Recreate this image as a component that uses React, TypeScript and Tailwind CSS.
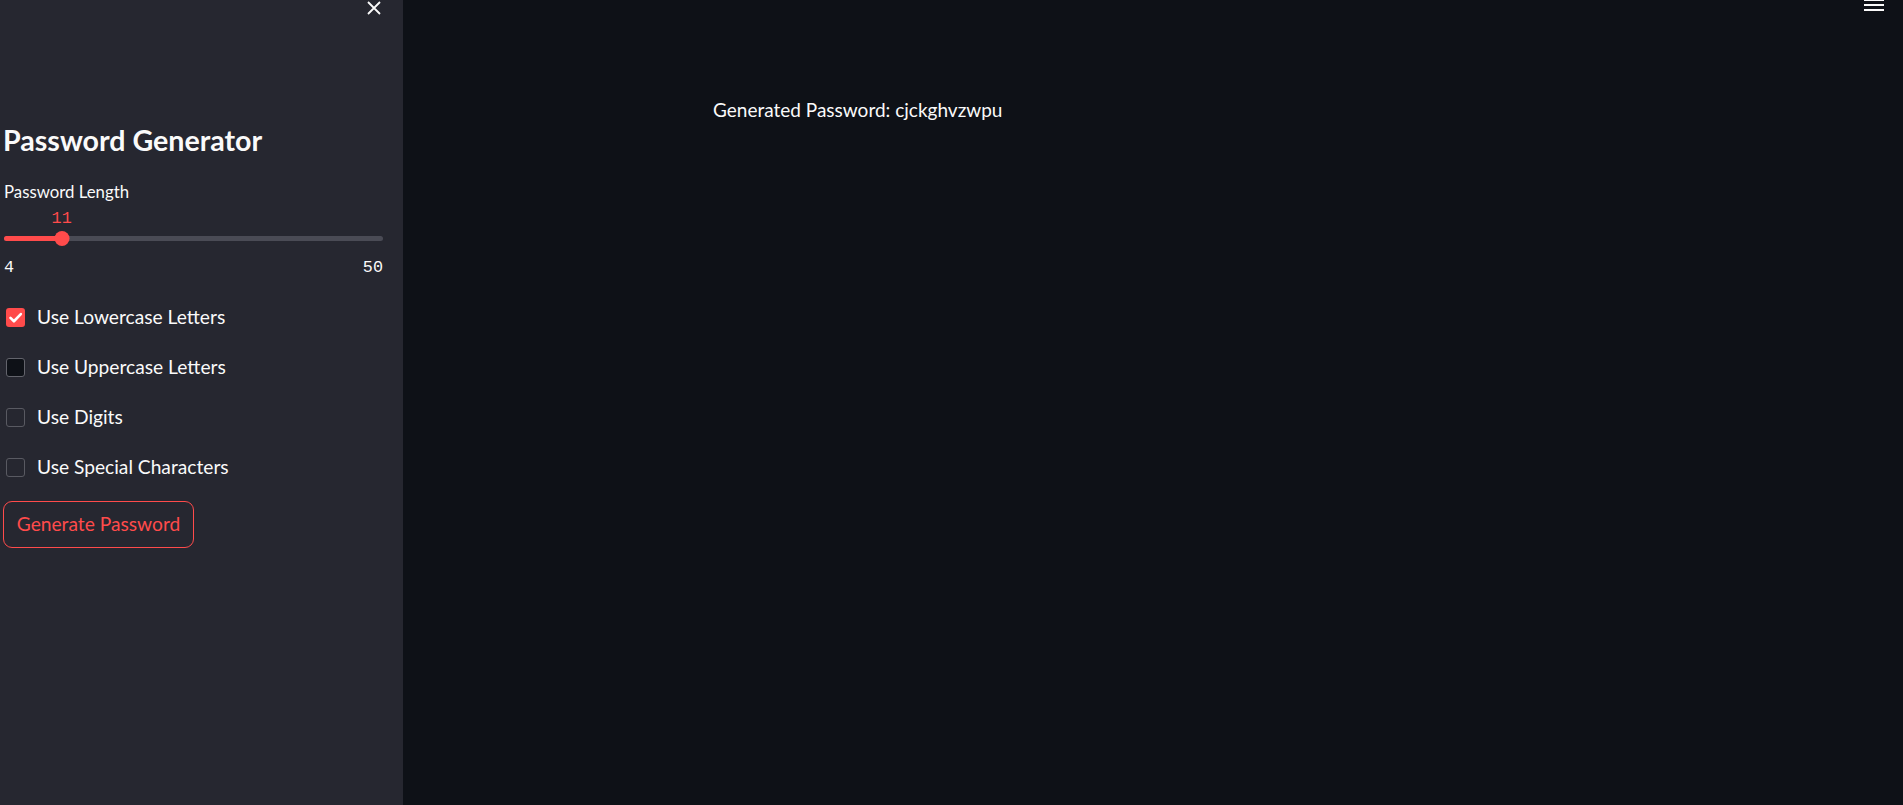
import { useState } from "react";

const sans = "font-['Lato','Noto_Sans',sans-serif]";
const mono = "font-['Liberation_Mono','DejaVu_Sans_Mono',monospace]";

const options = [
  { label: "Use Lowercase Letters", checked: true, hover: false },
  { label: "Use Uppercase Letters", checked: false, hover: true },
  { label: "Use Digits", checked: false, hover: false },
  { label: "Use Special Characters", checked: false, hover: false },
];

function Checkbox({ checked, hover }: { checked: boolean; hover: boolean }) {
  if (checked) {
    return (
      <span className="flex h-[19px] w-[19px] shrink-0 items-center justify-center rounded-[3px] bg-[#ff4b4b]">
        <svg width="15" height="15" viewBox="0 0 24 24" fill="none">
          <path
            d="M4 12.5l5.5 5.5L20.5 6.5"
            stroke="#fff"
            strokeWidth="4.2"
            strokeLinecap="round"
            strokeLinejoin="round"
          />
        </svg>
      </span>
    );
  }
  return (
    <span
      className={
        hover
          ? "h-[19px] w-[19px] shrink-0 rounded-[3px] border border-[#63646c] bg-[#0e1117]"
          : "h-[19px] w-[19px] shrink-0 rounded-[3px] border border-[#595a62]"
      }
    />
  );
}

function Slider({ value, min, max }: { value: number; min: number; max: number }) {
  const pct = ((value - min) / (max - min)) * 100;
  return (
    <div className="pr-[20px] pl-[1px]">
      <div className="relative mt-[5px] h-[17px]">
        <span
          className={`absolute top-0 -translate-x-1/2 text-[16.8px] leading-[17px] text-[#ff4b4b] ${mono}`}
          style={{ left: `${pct}%` }}
        >
          {value}
        </span>
      </div>
      <div className="relative mt-[4px] flex h-[15px] items-center">
        <div className="h-[5px] w-full rounded-full bg-[#4a4b55]" />
        <div
          className="absolute left-0 h-[5px] rounded-full bg-[#ff4b4b]"
          style={{ width: `${pct}%` }}
        />
        <div
          className="absolute h-[15px] w-[15px] -translate-x-1/2 rounded-full bg-[#ff4b4b]"
          style={{ left: `${pct}%` }}
        />
      </div>
      <div className={`mt-[13px] flex justify-between text-[16.8px] leading-[17px] text-[#fafafa] ${mono}`}>
        <span>{min}</span>
        <span>{max}</span>
      </div>
    </div>
  );
}

export default function App() {
  const [length] = useState(11);

  return (
    <div className={`flex h-[805px] w-full overflow-hidden bg-[#0e1117] text-[#fafafa] ${sans}`}>
      <aside className="relative w-[403px] shrink-0 bg-[#262730]">
        <button className="absolute top-[1px] left-[367px] text-[#fafafa]">
          <svg width="14" height="15" viewBox="0 0 14 15" fill="none">
            <path d="M1 1l12 12M13 1L1 13" stroke="currentColor" strokeWidth="1.8" />
          </svg>
        </button>

        <div className="pl-[3px]">
          <h1 className="mt-[121px] text-[28.6px] leading-[38px] font-bold">Password Generator</h1>

          <div className="mt-[19px] pl-[1px] text-[16.8px] leading-[27px]">Password Length</div>

          <Slider value={length} min={4} max={50} />

          <div className="mt-[16px] flex flex-col">
            {options.map((o) => (
              <label key={o.label} className="flex h-[50px] items-center gap-[12px] pl-[3px]">
                <Checkbox checked={o.checked} hover={o.hover} />
                <span className="text-[19.2px] leading-[30px]">{o.label}</span>
              </label>
            ))}
          </div>

          <button className="mt-[9px] flex h-[47px] w-[191px] items-center justify-center rounded-[9px] border border-[#ff4b4b] text-[19.2px] text-[#ff4b4b]">
            Generate Password
          </button>
        </div>
      </aside>

      <main className="relative flex-1">
        <button className="absolute top-[-1px] right-[19px] text-[#fafafa]">
          <svg width="20" height="14" viewBox="0 0 20 14" fill="none">
            <rect x="0" y="0" width="20" height="2" fill="currentColor" />
            <rect x="0" y="5" width="20" height="2" fill="currentColor" />
            <rect x="0" y="10" width="20" height="2" fill="currentColor" />
          </svg>
        </button>

        <div className="mx-auto w-[880px] pt-[94px]">
          <p className="text-[19px] leading-[31px]">Generated Password: cjckghvzwpu</p>
        </div>
      </main>
    </div>
  );
}
